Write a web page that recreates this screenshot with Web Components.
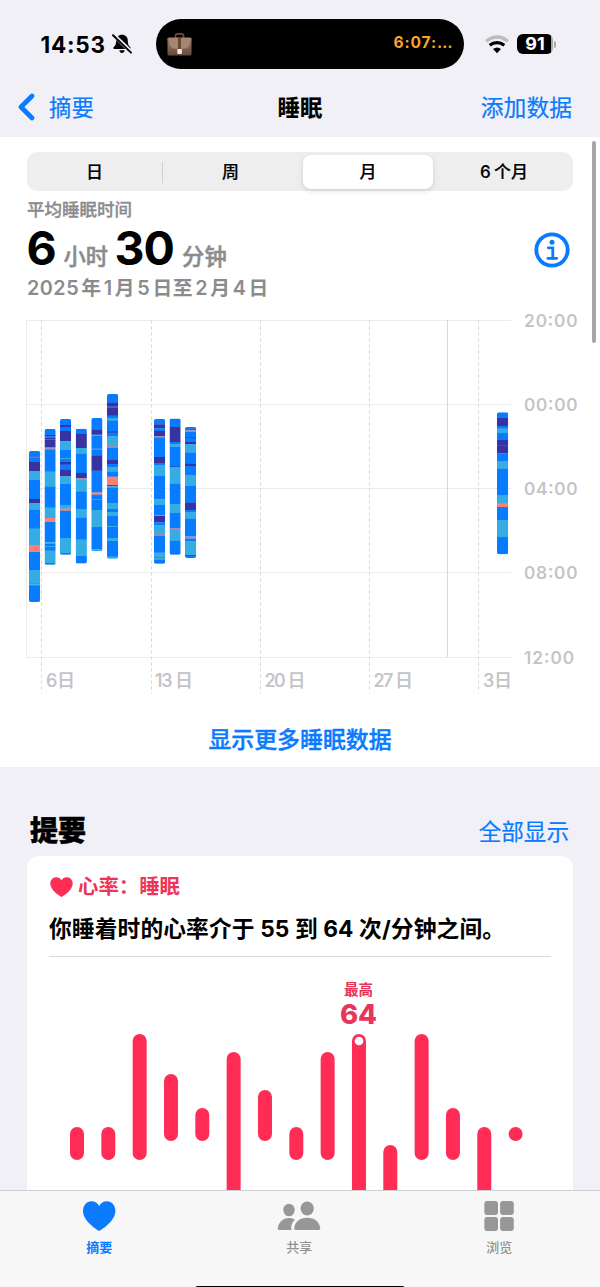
<!DOCTYPE html>
<html lang="zh-CN">
<head>
<meta charset="utf-8">
<title>睡眠</title>
<style>
html,body{margin:0;padding:0}
body{width:600px;height:1287px;overflow:hidden;background:#f1f0f6;color:#000;
font-family:Inter,"Noto Sans CJK SC",sans-serif;--blue:#0a7aff;--red:#ff2d55;--gray:#8b8b8d}
</style>
</head>
<body>
<health-app></health-app>
<script>
const define = (name, html, setup) => customElements.define(name, class extends HTMLElement {
  constructor() {
    super();
    const t = document.createElement('template');
    t.innerHTML = html;
    this.attachShadow({ mode: 'open' }).append(t.content.cloneNode(true));
  }
  connectedCallback() { if (setup) setup(this, this.shadowRoot); }
});

define('status-bar', `<style>
:host{display:flex;height:87px;box-sizing:border-box;padding:19px 44px 0 40.500px;align-items:flex-start}
.time{width:115.500px;height:50px;display:flex;align-items:center;font-size:22.500px;font-weight:700;gap:6px;letter-spacing:.8px}
.island{width:308px;height:50px;border-radius:25px;background:#000;box-sizing:border-box;padding:0 10px 0 11px;display:flex;align-items:center;justify-content:space-between;color:#f9a52b;font-size:15.5px;font-weight:700;letter-spacing:.9px}
.timer{line-height:48px;height:50px}
.right{display:flex;align-items:center;height:50px;margin-left:21px;gap:8.500px}
svg{display:block;flex:none}
.bat{display:flex;align-items:center;gap:1px}
.cell{width:36px;height:20px;border-radius:6px;background:linear-gradient(90deg,#000 0 34px,#aaa 34px);color:#fff;font-size:18px;font-weight:700;line-height:20px;text-align:center}
.tip{width:2px;height:7px;border-radius:0 3px 3px 0;background:#aaa}
</style>
<div class="time"><span>14:53</span>
<svg width="20" height="20" viewBox="0 0 20 20"><path d="M10 .8c-3.700 0-5.800 2.500-5.800 5.600 0 4.200-1.100 5.300-2.400 6.600-.6.600-.8 2 .6 2h15.200c1.400 0 1.200-1.400.6-2-1.300-1.300-2.400-2.400-2.400-6.600C15.800 3.300 13.700.8 10 .8zM7.400 16.200h5.200c-.2 1.700-1.200 2.800-2.600 2.800s-2.400-1.100-2.600-2.800z"/><path d="M1 .2 19 17.800" stroke="#f1f0f6" stroke-width="3.800"/><path d="M1 1.200 19 18.600" stroke="#000" stroke-width="1.900" stroke-linecap="round"/></svg></div>
<div class="island">
<svg width="25" height="23" viewBox="0 0 25 23"><defs><linearGradient id="g" x2="0" y2="1"><stop stop-color="#a58371"/><stop offset="1" stop-color="#66483b"/></linearGradient></defs><path d="M8.500 5V2.800Q8.500 1 10.300 1h4.400q1.800 0 1.800 1.800V5" fill="none" stroke="#654535" stroke-width="1.800"/><rect x=".5" y="4.500" width="24" height="18" rx="1.500" fill="url(#g)"/><path d="M.8 5q1 11 7 11h9.400q6 0 7-11" fill="#a78573" stroke="#8a6858" stroke-width=".8"/><path d="M11 4.500h3v12h-3z" fill="#68492f"/><rect x="10.300" y="16" width="4.600" height="5" rx="1" fill="#f2e9df"/></svg>
<span class="timer">6:07:…</span></div>
<div class="right">
<svg width="24" height="19" viewBox="0 0 24 19"><g fill="none" stroke-width="3.300"><path d="M1.200 6.400Q6 2 12 2t10.800 4.400" stroke="#bbbbc0"/><path d="M4.700 10.300Q8 7.600 12 7.600t7.300 2.700" stroke="#000"/></g><path d="M8 14.100q4-3.300 8 0l-4 4.200z"/></svg>
<div class="bat"><div class="cell">91</div><div class="tip"></div></div></div>`);

define('nav-bar', `<style>
:host{display:grid;grid-template-columns:1fr auto 1fr;align-items:center;height:50px;padding:0 28px 11px 17px;box-sizing:border-box;color:var(--blue);font-size:22.400px;-webkit-text-stroke:.2px}
.back{display:flex;align-items:center;gap:14px}
.back span{padding-bottom:2px}
.title{color:#000;font-weight:700;margin-left:-1px;padding:0 0 2px 12px}
.add{text-align:right;font-size:22.800px}
svg{display:block}
</style>
<div class="back"><svg width="18" height="28" viewBox="0 0 18 28"><path d="M15 3 4 14l11 11" fill="none" stroke="#0a7aff" stroke-width="4.700" stroke-linecap="round" stroke-linejoin="round"/></svg><span>摘要</span></div>
<div class="title"><slot></slot></div><div class="add">添加数据</div>`);

define('segment-control', `<style>
:host{display:grid;grid-template-columns:133px 137px 136px 1fr;height:39px;border-radius:10px;background:#eee;padding:2.500px 3px;box-sizing:border-box;font-size:17px;font-weight:500;line-height:34px;text-align:center;-webkit-text-stroke:.2px}
.on{background:#fff;border-radius:8px;box-shadow:0 2px 5px #0002;width:130px;margin-left:3px}
.div{padding-right:4px;background:linear-gradient(#cfcfd2,#cfcfd2) right 0 top 7px/1px 21px no-repeat}
.w{padding-right:2px}
.last{padding-left:2px;word-spacing:-1px}
</style><div class="div">日</div><div class="w">周</div><div class="on">月</div><div class="last">6 个月</div>`);

define('sleep-summary', `<style>
:host{display:flex;justify-content:space-between;align-items:center;padding:0 3px 0 0;height:114px;color:var(--gray);font-weight:600}
.label{font-size:17.500px;line-height:20px;height:20px;font-weight:500;margin-top:4px;-webkit-text-stroke:.3px}
.val{display:flex;align-items:baseline;font-size:22.300px;line-height:57px;height:56px;font-weight:500;-webkit-text-stroke:.5px}
b{color:#000;font-size:46.500px;font-weight:700;letter-spacing:-1.200px;-webkit-text-stroke:0;margin-left:-.5px}
.h{margin:0 7px 0 8px}.m{margin-left:8.500px}
.date{font-size:19.800px;line-height:24px;height:24px;letter-spacing:.5px;word-spacing:-3.300px}
svg{margin-top:4px}
</style><div><div class="label">平均睡眠时间</div>
<div class="val"><b>6</b><span class="h">小时</span><b>30</b><span class="m">分钟</span></div>
<div class="date">2025 年 1 月 5 日至 2 月 4 日</div></div>
<svg width="36" height="36" viewBox="0 0 36 36"><circle cx="18" cy="18" r="15.700" fill="none" stroke="#0a7aff" stroke-width="3.800"/><circle cx="18" cy="10.300" r="2.500" fill="#0a7aff"/><path d="M14.300 15.800h4.500v9.800M13.800 26.300h9" fill="none" stroke="#0a7aff" stroke-width="2.800" stroke-linecap="round"/></svg>`);

// Each night: x, start, then "stage + end" pairs. b core, d deep, c REM, r awake, n/p thin transitions.
const nights = [
[29,451,'b456.300 n457.300 b461.700 d471 c480 b499 d503 c509.700 b528.700 c545 r552 b570 c583.300 b584.200 c585.200 b602'],
[44.500,429,'b435 d436.500 b437.500 d439 b440 d447.500 p449.300 b471.700 c486.700 b507.700 c518 r522 b542.300 c543.500 b546 c547 b550.700 c563 b564.700'],
[60,419,'b425 d427 b431 d441.300 c450 b458 c459 b462 d464.700 b469.300 d476.300 c484 b505 c508.700 r510.700 b538 c553 b554.700'],
[75.700,428.700,'b433.700 d448 c453.700 b473 d478 p479.700 c491.300 b509 c517.700 b539.700 c556 b563.500'],
[91.300,418,'b429.700 d434.700 c436 b448.700 c449.700 b455.300 d470.700 b492.500 r494.700 b499 c499.800 b510 c527 b549.300 c551.300'],
[107,394,'b402.700 d406.500 n407.500 d415.700 b418 c420.700 b431 n433 b436 c446 p447.500 b460 d464 b467 c471.700 b476.700 r485 n486.300 c487.500 b503 c509 b512 c516 b526 c527 b538 c541 b556.700 c558.700'],
[154,419,'b424.300 d428.300 b431 d436 p437.300 b457 d463 b465 c476 b499.300 c505 b515 p516 d522.300 b525.500 c534 p535.700 b552.700 c557.300 n558.300 c559.300 b563.700'],
[169.500,418.500,'b426.700 d442 b444.500 c447 b466 n467 c483.700 b504 c513 b528 p529.500 b530.500 c540.700 b554.700'],
[185,427,'b430 p432 b437 n438 b442 d444 c452.300 b463.300 d466 b475 c486 b502.700 d510 b512 c518.700 b536.500 p538.700 b541.500 c555 n556 b557.900'],
[497,412.300,'b418 d426 b428.700 c433 b440 d445 n446 d453.300 b461 c468.700 b495 c503.700 r507 b520 c537 b554.300']];
const stage = { b:'#087cff', d:'#3634a3', c:'#35ade3', r:'#fb8073', n:'#2156c9', p:'#a08fb8' };

define('sleep-chart', `<style>:host{display:block;height:389px}svg{display:block}text{font:500 18px Inter,"Noto Sans CJK SC",sans-serif;fill:#c3c3c6;stroke:#c3c3c6;stroke-width:.15px}</style><svg width="600" height="389" viewBox="0 305 600 389"></svg>`, (el, root) => {
  let s = '<g stroke="#ebebec" stroke-width="1">';
  for (const y of [320.5,404.5,488.5,572.5,657.5]) s += `<path d="M26 ${y}H511"/>`;
  s += '<path d="M26.500 320V657"/></g><path d="M447.500 320V657" stroke="#d8d8da"/>';
  for (const x of [41.5,151.5,260.5,369.5,478.5]) s += `<path d="M${x} 320.500V693" stroke="#d6d6d8" stroke-dasharray="3 3"/>`;
  [['20:00',326.5],['00:00',410.5],['04:00',495],['08:00',579],['12:00',663.5]].forEach(([t,y]) => s += `<text x="524" y="${y}" textLength="${t=='12:00'?50:53.5}" style="font-size:17.500px">${t}</text>`);
  [['6 日',46,29],['13 日',155,38],['20 日',264.5,41],['27 日',373.5,39.5],['3 日',483,29]].forEach(([t,x,w]) => s += `<text x="${x}" y="686.500" textLength="${w}">${t}</text>`);
  nights.forEach(([x,top,segs],i) => {
    const parts = segs.split(' '), end = +parts.at(-1).slice(1);
    s += `<clipPath id="n${i}"><rect x="${x}" y="${top}" width="11.200" height="${end-top}" rx="1.800"/></clipPath><g clip-path="url(#n${i})">`;
    let y = top;
    for (const p of parts) { const e = +p.slice(1); s += `<rect x="${x}" y="${y}" width="11.200" height="${e-y+.2}" fill="${stage[p[0]]}"/>`; y = e; }
    s += '</g>';
  });
  root.querySelector('svg').innerHTML = s;
});

define('section-head', `<style>
:host{display:flex;justify-content:space-between;align-items:baseline;padding:43px 31px 0 30px;height:89px;box-sizing:border-box;font-size:28px;font-weight:800;line-height:42px;-webkit-text-stroke:.5px}
a{font-size:22.600px;font-weight:400;color:var(--blue);-webkit-text-stroke:.2px;position:relative;top:-1px}
</style><slot></slot><a>全部显示</a>`);

define('heart-card', `<style>
:host{display:block;margin:0 27px;height:500px;background:#fff;border-radius:12px;box-sizing:border-box;padding:18px 22px 0}
.k{display:flex;align-items:center;gap:4px;color:#ee3558;font-size:20.400px;font-weight:700;height:26px;line-height:26px}
p{margin:10px 0 0;font-size:22.750px;letter-spacing:.1px;font-weight:700;height:38px;line-height:38px;white-space:nowrap;border-bottom:1px solid #d9d9db;padding-bottom:8px}
svg{display:block}
.plot{margin-left:-49px}
text{font-family:Inter,"Noto Sans CJK SC",sans-serif;fill:#e73659;font-weight:700;text-anchor:middle}
</style><div class="k"><svg width="25" height="22" viewBox="0 0 25 22"><path d="M12.500 21C9.500 19.500 1.300 14 1.300 7.600 1.300 3.700 4 1.200 7.200 1.200c2.300 0 4.200 1.200 5.300 3.200 1.100-2 3-3.200 5.300-3.200 3.200 0 5.900 2.500 5.900 6.400C23.700 14 15.500 19.500 12.500 21z" fill="#ff2d55"/></svg><span>心率：睡眠</span></div>
<p>你睡着时的心率介于 55 到 64 次/分钟之间。</p><svg class="plot" width="600" height="240" viewBox="0 957 600 240"></svg>`, (el, root) => {
  const r = [[1127,1160],[1127,1160],[1034,1160],[1074,1141],[1108,1141],[1052,1230],[1090,1141],[1127,1160],[1052,1160],[1034,1230],[1145,1230],[1034,1160],[1108,1160],[1127,1230],[1127,1141]];
  root.querySelector('.plot').innerHTML = r.map(([a,b],i) => `<rect x="${77-7+i*31.33}" y="${a}" width="14" height="${b-a}" rx="7" fill="#ff2d55"/>`).join('') +
  '<circle cx="359" cy="1041" r="4.300" fill="#fff"/><text x="358.500" y="994.500" font-size="14.500">最高</text><text x="358.500" y="1023.700" font-size="27.500" textLength="37" style="font-weight:800">64</text>';
});

define('tab-item', `<style>
:host{display:flex;flex-direction:column;align-items:center;width:200px;box-sizing:border-box;padding-top:9px;color:#929292;font-size:13px;font-weight:500;line-height:18px;gap:6px}
:host([active]){color:#0a7aff;font-weight:700}
</style><slot name="icon"></slot><span><slot></slot></span>`);

define('tab-bar', `<style>
:host{display:flex;position:absolute;left:0;top:1190px;width:600px;height:97px;box-sizing:border-box;border-top:1px solid #cfcfd2;background:#f7f7f7}
svg{display:block}
tab-item{margin-left:-.8px;margin-right:.8px}
.home{position:absolute;left:195px;top:95px;width:210px;height:6px;border-radius:3px;background:#000}
:host{overflow:hidden}
</style>
<tab-item active><svg slot="icon" width="34" height="32" viewBox="0 0 34 32"><path d="M17.200 31C13.500 29 1 20.500 1 11 1 5.200 4.600 1.200 9.500 1.200c3.400 0 6.200 1.800 7.700 4.800 1.500-3 4.300-4.800 7.700-4.800 4.900 0 8.500 4 8.500 9.800 0 9.500-12.500 18-16.200 20z" fill="#0a7aff"/></svg>摘要</tab-item>
<tab-item><svg slot="icon" width="44" height="32" viewBox="277 1200 44 32" fill="#979797"><ellipse cx="289" cy="1210" rx="5.700" ry="6.300"/><ellipse cx="307.200" cy="1208.500" rx="6.600" ry="7"/><path d="M279.500 1230c-1.500 0-1.900-.8-1.700-2 .8-5.500 5-10 11.200-10 2.300 0 4.300.6 6 1.600-2.500 2.400-3.800 5.500-3.800 8.200 0 .8.100 1.500.4 2.200z"/><path d="M296 1230c-1.500 0-2-.8-1.800-2 .8-6.200 5.800-10.200 13-10.200s12.200 4 13 10.200c.2 1.200-.3 2-1.800 2z"/></svg>共享</tab-item>
<tab-item><svg slot="icon" width="30" height="32" viewBox="484.500 1200 30 32" fill="#979797"><rect x="484.800" y="1201" width="13.700" height="14" rx="3"/><rect x="500.600" y="1201" width="13.700" height="14" rx="3"/><rect x="484.800" y="1217" width="13.700" height="14" rx="3"/><rect x="500.600" y="1217" width="13.700" height="14" rx="3"/></svg>浏览</tab-item>
<div class="home"></div>`);

define('health-app', `<style>
:host{display:block;position:relative;width:600px;height:1287px;overflow:hidden}
.panel{background:#fff;height:630px;overflow:hidden;padding-top:15px;box-sizing:border-box}
.inset{margin:0 27px}
.more{text-align:center;color:var(--blue);font-size:22.900px;font-weight:500;line-height:34px;padding-top:29px;-webkit-text-stroke:.4px}
.scroll{position:absolute;left:592px;top:141px;width:4px;height:202px;border-radius:2px;background:#a6a6a6}
</style>
<status-bar></status-bar><nav-bar>睡眠</nav-bar>
<div class="panel"><div class="inset"><segment-control></segment-control><sleep-summary></sleep-summary></div>
<sleep-chart></sleep-chart><div class="more">显示更多睡眠数据</div></div>
<section-head>提要</section-head><heart-card></heart-card><tab-bar></tab-bar><div class="scroll"></div>`);
</script>
</body>
</html>
